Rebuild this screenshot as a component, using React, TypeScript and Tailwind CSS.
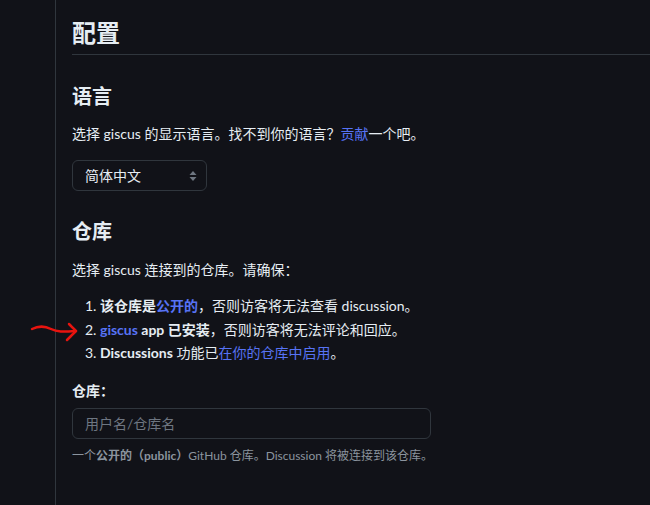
import React from 'react';

const font = { fontFamily: 'Lato, "Noto Sans CJK SC", sans-serif' };

function UpDownIcon() {
  return (
    <svg width="8" height="12" viewBox="0 0 8 12" className="text-[#6e7681]">
      <path d="M4 1 L7.5 5 H0.5 Z" fill="currentColor" />
      <path d="M4 11 L7.5 7 H0.5 Z" fill="currentColor" />
    </svg>
  );
}

function RedArrow() {
  // 截图上手绘的红色箭头
  return (
    <svg
      className="pointer-events-none absolute left-0 top-0"
      width="90"
      height="360"
      viewBox="0 0 90 360"
    >
      <path
        d="M32 329 C38 326 45 326 51 329 S63 332 75 331"
        fill="none"
        stroke="#e8140f"
        strokeWidth="2.5"
        strokeLinecap="round"
      />
      <path
        d="M69 324 L76 331 L67 340"
        fill="none"
        stroke="#e8140f"
        strokeWidth="2.5"
        strokeLinecap="round"
        strokeLinejoin="round"
      />
    </svg>
  );
}

export default function App() {
  return (
    <div
      className="relative flex min-h-[505px] overflow-hidden bg-[#111218] text-[#e6edf3]"
      style={font}
    >
      <div className="w-[56px] shrink-0 border-r border-[#30363d]" />
      <main className="flex-1 pl-4">
        <h1 className="mt-[18px] border-b border-[#30363d] pb-[6px] text-[24px] font-bold leading-[30px]">
          配置
        </h1>

        <h2 className="mt-[26px] text-[20px] font-bold leading-[30px]">语言</h2>
        <p className="mt-[12px] text-[14px] leading-[21px]">
          选择 giscus 的显示语言。找不到你的语言？
          <a className="text-[#5773f5]">贡献</a>一个吧。
        </p>
        <div className="mt-[16px] flex h-[31px] w-[135px] items-center justify-between rounded-md border border-[#30363d] pl-3 pr-[9px] text-[14px]">
          <span>简体中文</span>
          <UpDownIcon />
        </div>

        <h2 className="mt-[25px] text-[20px] font-bold leading-[30px]">仓库</h2>
        <p className="mt-[13px] text-[14px] leading-[21px]">选择 giscus 连接到的仓库。请确保：</p>
        <ol className="mt-[14px] list-decimal pl-[28px] text-[14px] leading-[23.5px]">
          <li>
            <strong>该仓库是</strong>
            <strong className="text-[#5773f5]">公开的</strong>，否则访客将无法查看 discussion。
          </li>
          <li>
            <strong className="text-[#5773f5]">giscus</strong>
            <strong> app 已安装</strong>，否则访客将无法评论和回应。
          </li>
          <li>
            <strong>Discussions</strong> 功能已<a className="text-[#5773f5]">在你的仓库中启用</a>。
          </li>
        </ol>

        <label className="mt-[15px] block text-[14px] font-bold leading-[21px]">仓库：</label>
        <input
          className="mt-[7.5px] block h-[31px] w-[359px] rounded-md border border-[#30363d] bg-transparent px-3 text-[14px] outline-none placeholder:text-[#6e7681]"
          placeholder="用户名/仓库名"
        />
        <p className="mt-[8px] text-[12px] leading-[18px] text-[#8b949e]">
          一个<strong>公开的（public）</strong>GitHub 仓库。Discussion 将被连接到该仓库。
        </p>
      </main>
      <RedArrow />
    </div>
  );
}
